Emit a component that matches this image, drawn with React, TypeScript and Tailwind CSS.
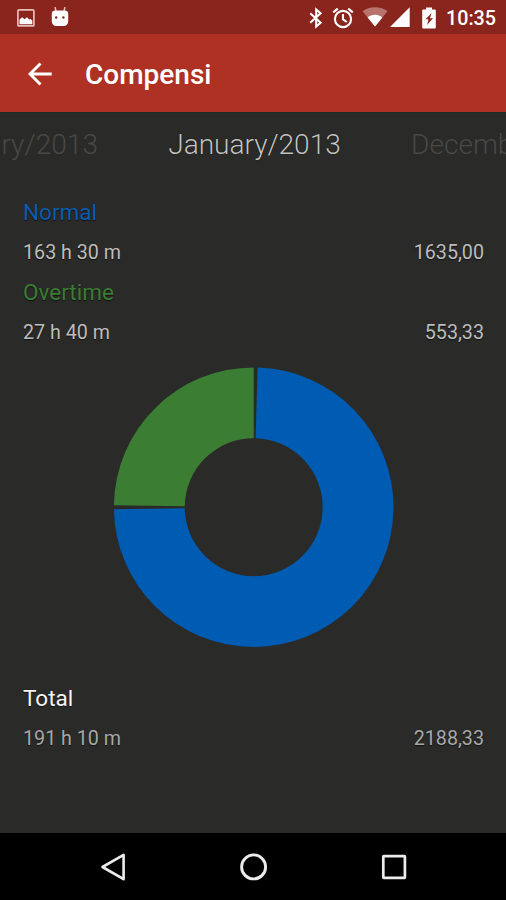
import clsx from "clsx";

type Slice = { color: string; from: number; to: number };

const slices: Slice[] = [
    { color: "#005cb2", from: 1.6, to: 269.2 },
    { color: "#3b7d32", from: 270.8, to: 360 },
];

const CENTER_X = 140.7;
const CENTER_Y = 140.2;
const OUTER = 139.8;
const INNER = 69;

function point(radius: number, deg: number) {
    const rad = (deg * Math.PI) / 180;
    return `${CENTER_X + radius * Math.sin(rad)} ${CENTER_Y - radius * Math.cos(rad)}`;
}

function slicePath({ from, to }: Slice) {
    const large = to - from > 180 ? 1 : 0;
    return [
        `M${point(OUTER, from)}`,
        `A${OUTER} ${OUTER} 0 ${large} 1 ${point(OUTER, to)}`,
        `L${point(INNER, to)}`,
        `A${INNER} ${INNER} 0 ${large} 0 ${point(INNER, from)}`,
        "Z",
    ].join(" ");
}

function DonutChart() {
    return (
        <svg viewBox="0 0 280 280" className="size-[280px] overflow-visible">
            {slices.map(slice => (
                <path key={slice.color} d={slicePath(slice)} fill={slice.color} />
            ))}
        </svg>
    );
}

function StatusBar() {
    return (
        <div className="flex h-[34px] items-center bg-[#89251c] pl-[17px] pr-[11px] text-white">
            {/* Screenshot notification */}
            <svg viewBox="0 0 18 18" className="mt-px size-[18px]" fill="none">
                <rect x="0.9" y="0.9" width="16" height="16" rx="1" stroke="#e5bdb9" strokeWidth="1.7" />
                <path d="M2.500 15.200v-4.700l2.800-2.300 2.200 2 2.500-2 2.300 2.300 1.200-.5 1.800 1.500v3.700Z" fill="#fff" />
            </svg>
            {/* Android head */}
            <svg viewBox="0 0 18 20" className="ml-4 h-5 w-[18px]">
                <path d="M4 0 5 4M14 0l-1 4" stroke="#e5bdb9" strokeWidth="1.500" />
                <path d="M3.500 3.500h11a3 3 0 0 1 2.700 2.800v8.200a4.500 4.500 0 0 1-4.500 4.500H5.300a4.500 4.500 0 0 1-4.500-4.500V6.300a3 3 0 0 1 2.700-2.800Z" fill="#fff" />
                <circle cx="5.200" cy="10.500" r="1.200" fill="#89251c" />
                <circle cx="12.400" cy="10.500" r="1.200" fill="#89251c" />
            </svg>

            {/* Bluetooth */}
            <svg viewBox="0 0 14 22" className="ml-auto mt-0.5 h-[22px] w-3.5" fill="none" stroke="#fff" strokeWidth="2.100">
                <path d="m1.200 6.200 10.400 9.500L7.200 19.500V2.500l4.400 3.800L1.200 15.800" />
            </svg>
            {/* Alarm */}
            <svg viewBox="0 0 22 22" className="ml-[9px] mt-px size-[22px]" fill="none" stroke="#fff" strokeWidth="2.100">
                <circle cx="11" cy="12" r="8.100" />
                <path d="M11 7v5.400l3.800 2.600" />
                <path d="M1.200 5.400 5.800 1.600M20.800 5.400l-4.600-3.800" />
            </svg>
            {/* Wi-Fi */}
            <svg viewBox="0 0 26 20" className="ml-2 h-5 w-[26px]">
                <path d="M13 19.500.500 4.300C4 1.700 8 .300 13 .300s9 1.400 12.500 4Z" fill="#b9736d" />
                <path d="M13 19.500 5.600 10.400c4-3.500 10.800-3.500 14.800 0Z" fill="#fff" />
            </svg>
            {/* Signal */}
            <svg viewBox="0 0 20 20" className="ml-0.5 size-5">
                <path d="M0 20 19.700.300V20Z" fill="#fff" />
            </svg>
            {/* Battery */}
            <svg viewBox="0 0 14 22" className="ml-3 mt-px h-[22px] w-3.5">
                <path d="M1.200 2.600H4V.600h6v2h2.800a1 1 0 0 1 1 1v16.800a1 1 0 0 1-1 1H1.200a1 1 0 0 1-1-1V3.600a1 1 0 0 1 1-1Z" fill="#fff" />
                <path d="M9.600 6 3.500 12.300h3L5 18l6-6.700H7.900Z" fill="#89251c" />
            </svg>
            <span className="ml-2.5 mt-[3px] w-[49px] whitespace-nowrap text-[19.700px] font-medium leading-none">10:35</span>
        </div>
    );
}

function AppBar() {
    return (
        <div className="flex h-[78px] items-center bg-[#af3124] pl-7 text-white">
            <svg viewBox="0 0 24 24" className="mt-px size-6" fill="none" stroke="#fff" strokeWidth="2.900">
                <path d="M23.700 12H2.500M12.500 1.500 2 12l10.500 10.500" />
            </svg>
            <h1 className="ml-[33px] mt-1 text-[28px] font-medium leading-8">Compensi</h1>
        </div>
    );
}

function MonthStrip() {
    return (
        <div className="flex h-16 items-center justify-between overflow-hidden whitespace-nowrap pt-px text-[28.100px] font-light text-[#484847]">
            <div className="flex w-[98px] justify-end overflow-hidden">
                <span>February/2013</span>
            </div>
            <span className="tracking-[-0.05px] text-[#c4c4c3] [text-shadow:0_0_1px_#000]">January/2013</span>
            <div className="w-[95px] overflow-hidden">December/2012</div>
        </div>
    );
}

type EntryProps = { label: string; labelClass: string; hours: string; amount: string; valueClass?: string };

function Entry({ label, labelClass, hours, amount, valueClass = "text-[#bdbdbc]" }: EntryProps) {
    return (
        <div className="pl-[23px] pr-[22px] [text-shadow:0_1px_1px_rgba(0,0,0,0.6)]">
            <div className={clsx("flex h-10 items-center text-[22.500px]", labelClass)}>{label}</div>
            <div className={clsx("flex h-10 items-center justify-between text-[19.700px]", valueClass)}>
                <span>{hours}</span>
                <span>{amount}</span>
            </div>
        </div>
    );
}

function NavBar() {
    return (
        <div className="flex h-[67px] items-center justify-between bg-black pl-[100px] pr-[98px]">
            <svg viewBox="0 0 28 28" className="size-7" fill="none" stroke="#ececec" strokeWidth="2.600" strokeLinejoin="round">
                <path d="M23.600 1.800v24.400L2.500 14Z" />
            </svg>
            <svg viewBox="0 0 28 28" className="size-7" fill="none" stroke="#ececec" strokeWidth="2.900">
                <circle cx="13.600" cy="13.900" r="12" />
            </svg>
            <svg viewBox="0 0 28 28" className="size-7" fill="none" stroke="#ececec" strokeWidth="2.700">
                <rect x="3.300" y="3.200" width="21.600" height="21.600" rx="0.500" />
            </svg>
        </div>
    );
}

export default function App() {
    return (
        <div className="flex h-[900px] w-[506px] flex-col overflow-hidden bg-[#2a2a28] font-[Roboto,sans-serif]">
            <StatusBar />
            <AppBar />
            <main className="flex flex-1 flex-col border-t border-[#202a29]">
                <MonthStrip />
                <div className="mt-4">
                    <Entry label="Normal" labelClass="text-[#0a5cb0]" hours="163 h 30 m" amount="1635,00" />
                    <Entry label="Overtime" labelClass="text-[#3a7d32]" hours="27 h 40 m" amount="553,33" />
                </div>
                <div className="mt-3.5 flex justify-center">
                    <DonutChart />
                </div>
                <div className="mt-8">
                    <Entry label="Total" labelClass="text-[#f5f5f5]" hours="191 h 10 m" amount="2188,33" valueClass="text-[#a8a8a7]" />
                </div>
            </main>
            <NavBar />
        </div>
    );
}
